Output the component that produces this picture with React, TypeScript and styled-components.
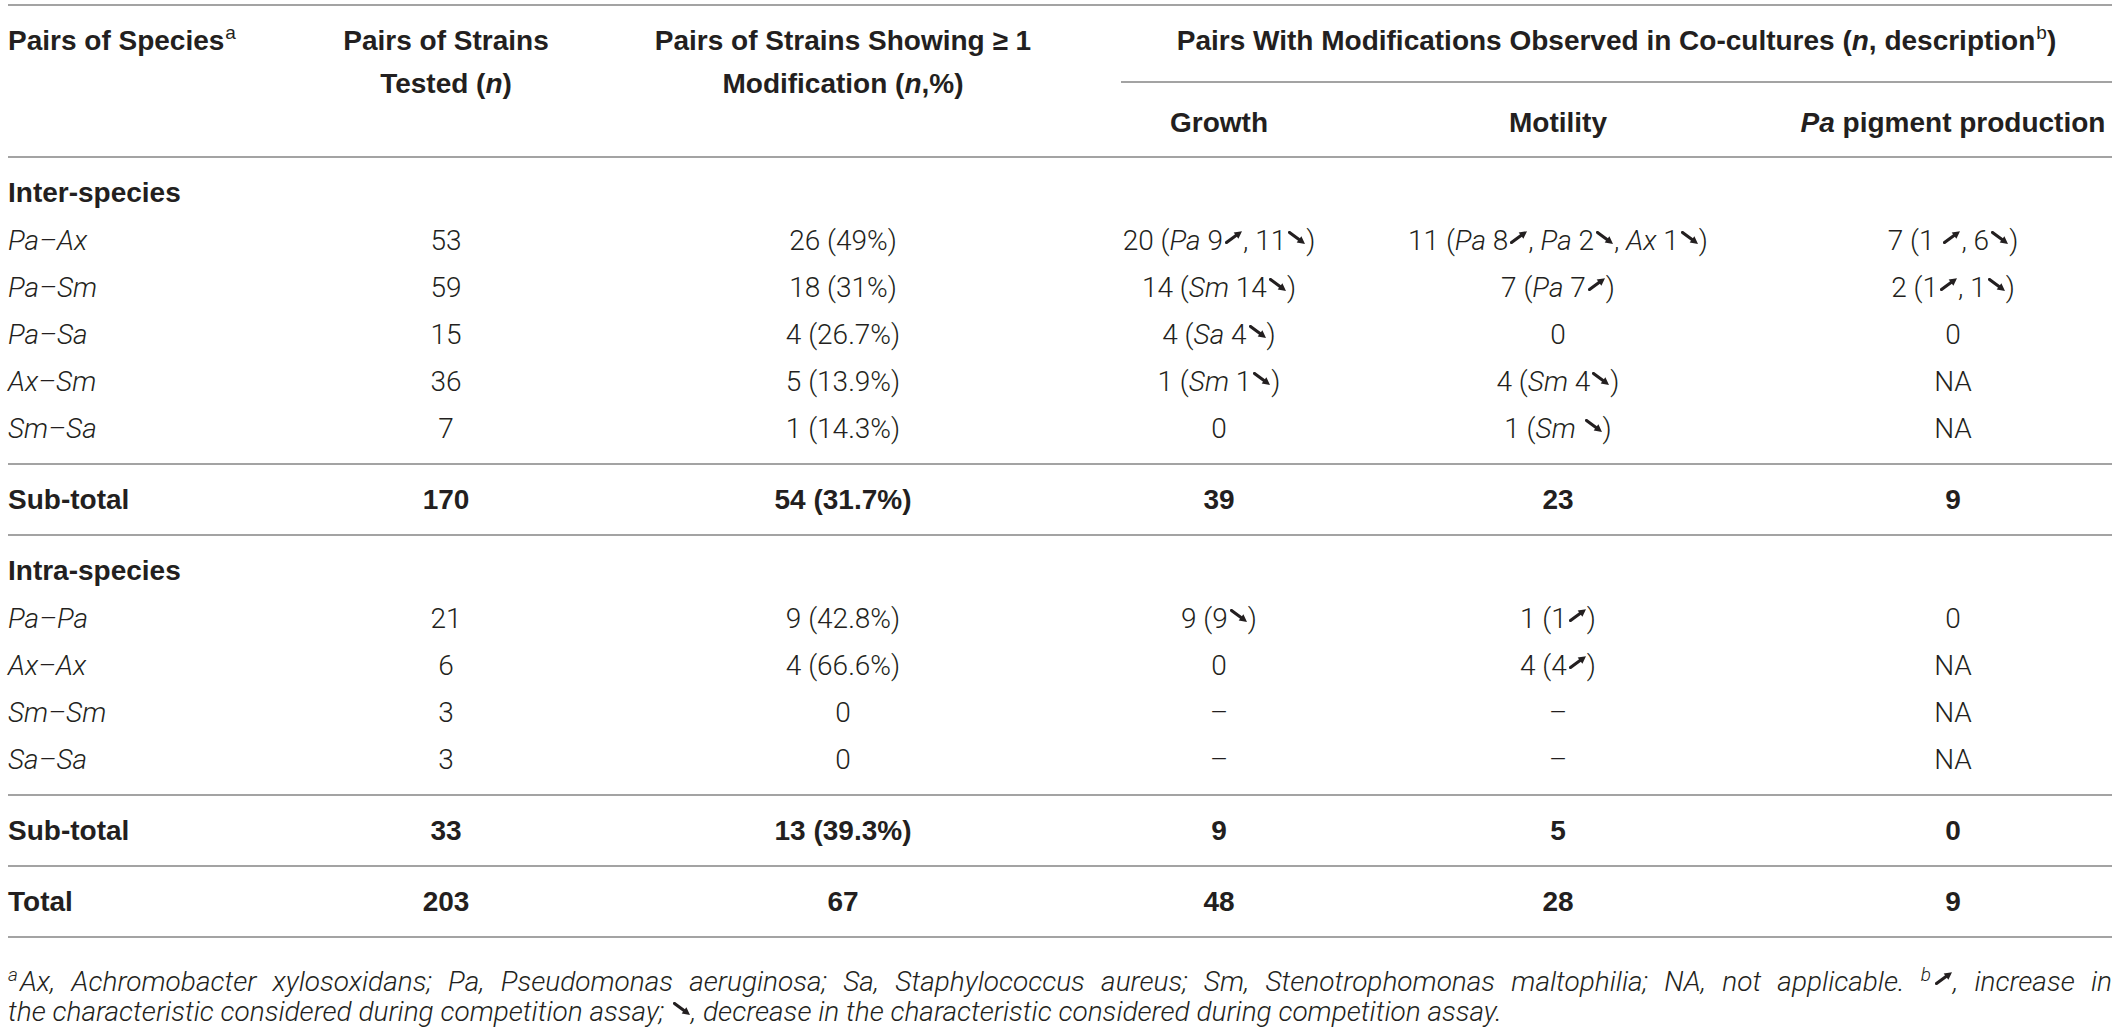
import React from 'react';
import styled, { createGlobalStyle } from 'styled-components';

const INK = '#231f20';
const RULE = '#a3a3a3';
const COLS = '314px 248px 546px 206px 472px 318px';
const BOLD_FONT = '"Liberation Sans", Arial, Helvetica, sans-serif';
const LIGHT_FONT = 'Roboto, "Liberation Sans", Arial, sans-serif';

const GlobalStyle = createGlobalStyle`
  html, body { margin: 0; padding: 0; background: #ffffff; }
  body {
    color: ${INK};
    font-family: ${LIGHT_FONT};
    font-weight: 300;
    font-size: 28px;
  }
`;

const Page = styled.div`
  padding: 4px 8px 0 8px;
`;

const Table = styled.div`
  width: 2104px;
  border-top: 2px solid ${RULE};
`;

const Head = styled.div`
  display: grid;
  grid-template-columns: ${COLS};
  grid-template-rows: 77px 73px;
  border-bottom: 2px solid ${RULE};
  font-family: ${BOLD_FONT};
  font-weight: 700;
  font-size: 28px;
  line-height: 43px;
`;

const HeadCell = styled.div<{ $align?: 'left' | 'center' }>`
  grid-row: 1 / 3;
  padding-top: 13px;
  text-align: ${(p) => p.$align ?? 'center'};
  white-space: nowrap;
`;

const GroupCell = styled.div`
  grid-column: 4 / 7;
  grid-row: 1;
  margin-left: 5px;
  padding-top: 13px;
  border-bottom: 2px solid ${RULE};
  text-align: center;
  white-space: nowrap;
`;

const SubHeadCell = styled.div`
  grid-row: 2;
  padding-top: 18px;
  text-align: center;
  white-space: nowrap;
`;

const Sup = styled.sup`
  font-size: 19px;
  font-weight: 400;
  line-height: 0;
  vertical-align: 11px;
  margin-left: 1px;
`;

const Section = styled.div`
  padding: 11px 0;
  border-bottom: 2px solid ${RULE};
`;

const Row = styled.div<{ $bold?: boolean }>`
  display: grid;
  grid-template-columns: ${COLS};
  height: 47px;
  line-height: 47px;
  font-size: 28px;
  font-family: ${(p) => (p.$bold ? BOLD_FONT : LIGHT_FONT)};
  font-weight: ${(p) => (p.$bold ? 700 : 300)};
`;

const GroupTitle = styled.div`
  height: 48px;
  line-height: 48px;
  font-family: ${BOLD_FONT};
  font-weight: 700;
  font-size: 28px;
`;

const Cell = styled.div<{ $label?: boolean }>`
  text-align: ${(p) => (p.$label ? 'left' : 'center')};
  font-style: ${(p) => (p.$label ? 'italic' : 'normal')};
  white-space: nowrap;
`;

const Em = styled.i`
  font-style: italic;
`;

const Foot = styled.div`
  padding-top: 29px;
  font-style: italic;
  font-weight: 300;
  font-size: 28px;
  line-height: 30px;
`;

const FootLine = styled.div<{ $justify?: boolean }>`
  text-align: ${(p) => (p.$justify ? 'justify' : 'left')};
  text-align-last: ${(p) => (p.$justify ? 'justify' : 'auto')};
  white-space: ${(p) => (p.$justify ? 'normal' : 'nowrap')};
`;

const FootSup = styled.sup`
  font-size: 19px;
  line-height: 0;
  vertical-align: 10px;
  margin-right: 2px;
`;

const ArrowSvg = styled.svg`
  width: 17px;
  height: 13px;
  vertical-align: 6px;
  margin: 0 1px 0 2px;
`;

const Arrow: React.FC<{ dir: 'up' | 'down' }> = ({ dir }) => (
  <ArrowSvg viewBox="0 0 16 12" aria-hidden="true">
    {dir === 'up' ? (
      <>
        <line x1="1.4" y1="10.8" x2="11" y2="3.6" stroke={INK} strokeWidth="2.9" strokeLinecap="round" />
        <polygon points="16,0 8.2,1.4 12.6,7.2" fill={INK} />
      </>
    ) : (
      <>
        <line x1="1.4" y1="1.2" x2="11" y2="8.4" stroke={INK} strokeWidth="2.9" strokeLinecap="round" />
        <polygon points="16,12 8.2,10.6 12.6,4.8" fill={INK} />
      </>
    )}
  </ArrowSvg>
);

const rich = (s: string) =>
  s
    .split(/(\*[^*]+\*|\^|~)/)
    .filter((t) => t !== '')
    .map((t, i) => {
      if (t === '^') return <Arrow key={i} dir="up" />;
      if (t === '~') return <Arrow key={i} dir="down" />;
      if (t.startsWith('*')) return <Em key={i}>{t.slice(1, -1)}</Em>;
      return <React.Fragment key={i}>{t}</React.Fragment>;
    });

type RowData = [string, string, string, string, string, string];

const inter: RowData[] = [
  ['Pa–Ax', '53', '26 (49%)', '20 (*Pa* 9^, 11~)', '11 (*Pa* 8^, *Pa* 2~, *Ax* 1~)', '7 (1 ^, 6~)'],
  ['Pa–Sm', '59', '18 (31%)', '14 (*Sm* 14~)', '7 (*Pa* 7^)', '2 (1^, 1~)'],
  ['Pa–Sa', '15', '4 (26.7%)', '4 (*Sa* 4~)', '0', '0'],
  ['Ax–Sm', '36', '5 (13.9%)', '1 (*Sm* 1~)', '4 (*Sm* 4~)', 'NA'],
  ['Sm–Sa', '7', '1 (14.3%)', '0', '1 (*Sm* ~)', 'NA'],
];

const intra: RowData[] = [
  ['Pa–Pa', '21', '9 (42.8%)', '9 (9~)', '1 (1^)', '0'],
  ['Ax–Ax', '6', '4 (66.6%)', '0', '4 (4^)', 'NA'],
  ['Sm–Sm', '3', '0', '–', '–', 'NA'],
  ['Sa–Sa', '3', '0', '–', '–', 'NA'],
];

const DataRow: React.FC<{ data: RowData }> = ({ data }) => (
  <Row>
    {data.map((v, i) => (
      <Cell key={i} $label={i === 0}>
        {rich(v)}
      </Cell>
    ))}
  </Row>
);

const TotalCell = styled.div<{ $first?: boolean }>`
  text-align: ${(p) => (p.$first ? 'left' : 'center')};
  white-space: nowrap;
`;

const TotalRow: React.FC<{ data: RowData }> = ({ data }) => (
  <Row $bold>
    {data.map((v, i) => (
      <TotalCell key={i} $first={i === 0}>
        {v}
      </TotalCell>
    ))}
  </Row>
);

export default function App() {
  return (
    <>
      <GlobalStyle />
      <Page>
        <Table>
          <Head>
            <HeadCell $align="left">
              Pairs of Species<Sup>a</Sup>
            </HeadCell>
            <HeadCell>
              Pairs of Strains
              <br />
              Tested (<Em>n</Em>)
            </HeadCell>
            <HeadCell>
              Pairs of Strains Showing ≥ 1
              <br />
              Modification (<Em>n</Em>,%)
            </HeadCell>
            <GroupCell>
              Pairs With Modifications Observed in Co-cultures (<Em>n</Em>, description<Sup>b</Sup>)
            </GroupCell>
            <SubHeadCell>Growth</SubHeadCell>
            <SubHeadCell>Motility</SubHeadCell>
            <SubHeadCell>
              <Em>Pa</Em> pigment production
            </SubHeadCell>
          </Head>

          <Section>
            <GroupTitle>Inter-species</GroupTitle>
            {inter.map((r) => (
              <DataRow key={r[0]} data={r} />
            ))}
          </Section>
          <Section>
            <TotalRow data={['Sub-total', '170', '54 (31.7%)', '39', '23', '9']} />
          </Section>
          <Section>
            <GroupTitle>Intra-species</GroupTitle>
            {intra.map((r) => (
              <DataRow key={r[0]} data={r} />
            ))}
          </Section>
          <Section>
            <TotalRow data={['Sub-total', '33', '13 (39.3%)', '9', '5', '0']} />
          </Section>
          <Section>
            <TotalRow data={['Total', '203', '67', '48', '28', '9']} />
          </Section>

          <Foot>
            <FootLine $justify>
              <FootSup>a</FootSup>Ax, Achromobacter xylosoxidans; Pa, Pseudomonas aeruginosa; Sa, Staphylococcus
              aureus; Sm, Stenotrophomonas maltophilia; NA, not applicable. <FootSup>b</FootSup>
              <Arrow dir="up" />, increase in
            </FootLine>
            <FootLine>
              the characteristic considered during competition assay; <Arrow dir="down" />, decrease in the
              characteristic considered during competition assay.
            </FootLine>
          </Foot>
        </Table>
      </Page>
    </>
  );
}
